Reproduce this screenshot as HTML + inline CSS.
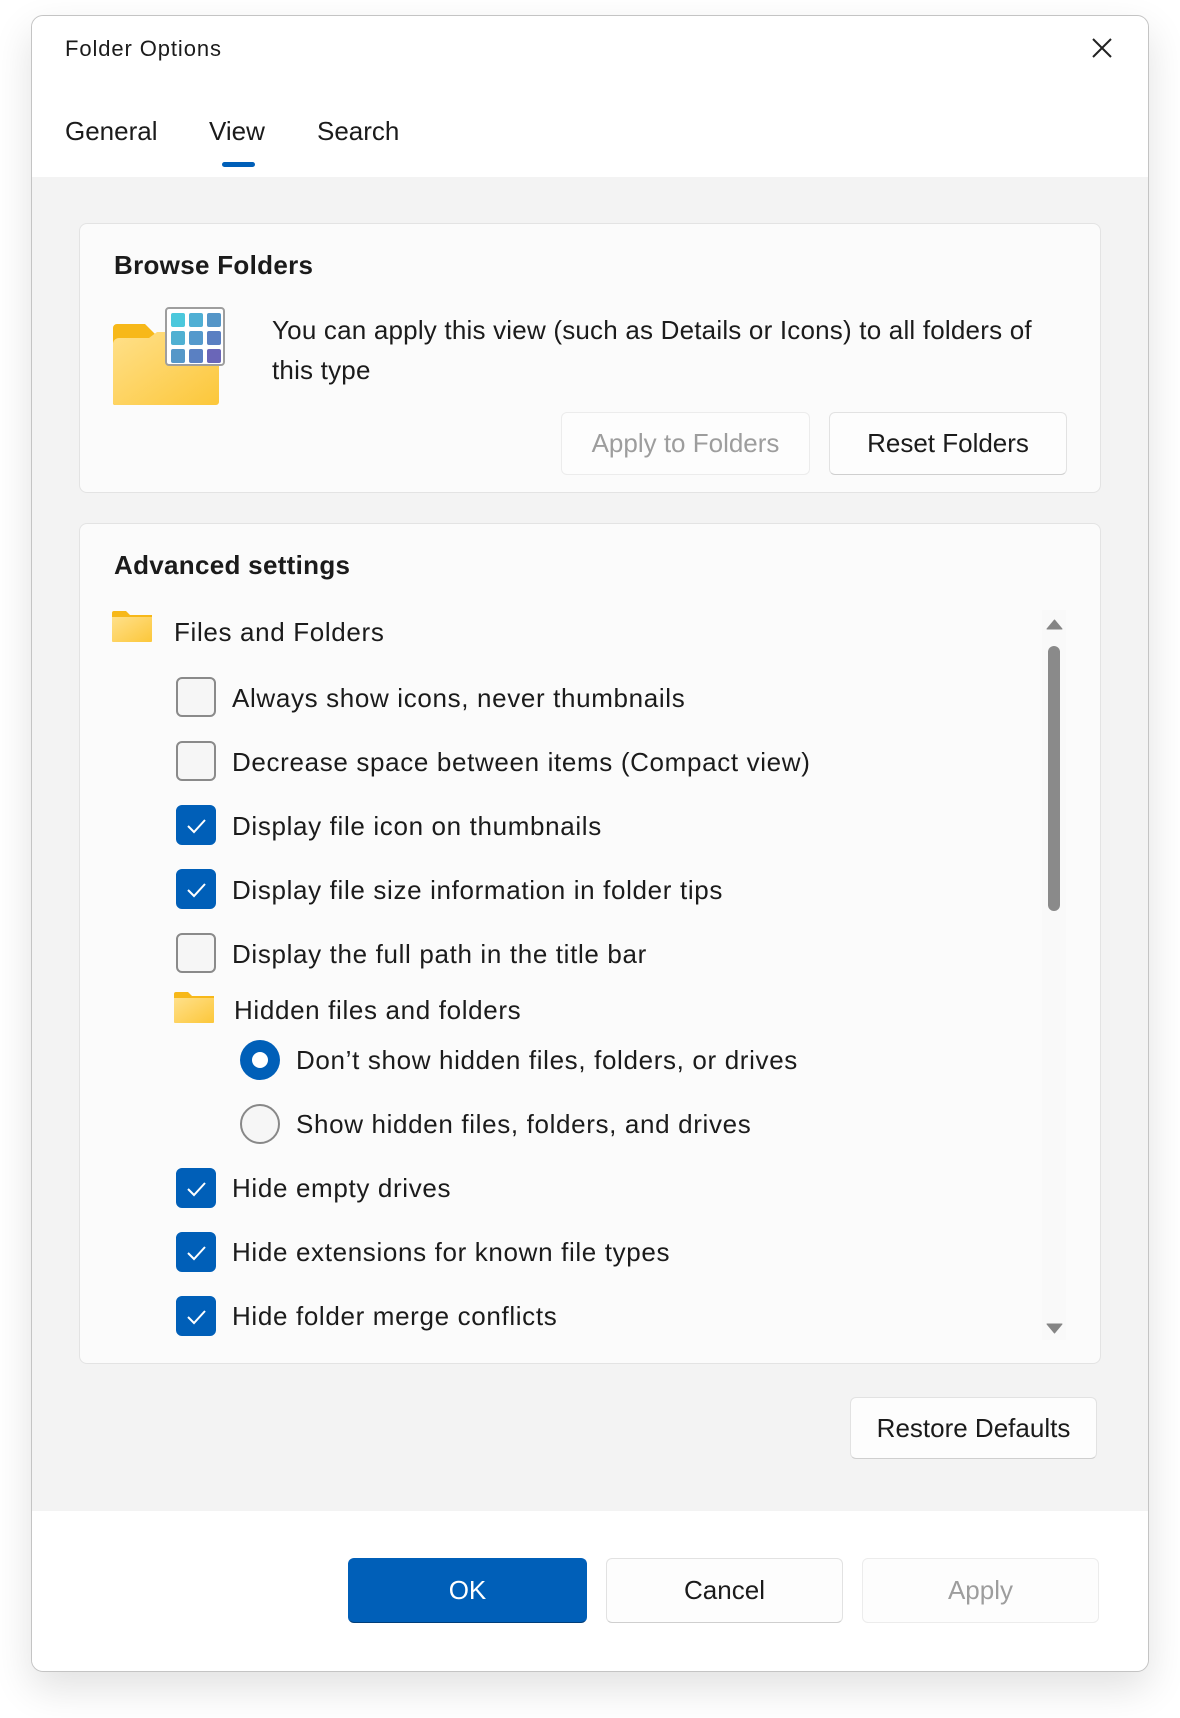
<!DOCTYPE html>
<html><head><meta charset="utf-8"><style>
*{box-sizing:border-box;margin:0;padding:0}
body{width:1180px;height:1718px;background:#fff;font-family:"Liberation Sans",sans-serif;color:#1b1b1b;position:relative;overflow:hidden}
.a{position:absolute}
.dlg{left:31px;top:15px;width:1118px;height:1657px;border:1.5px solid #c4c4c4;border-radius:12px;background:#f3f3f3;overflow:hidden;box-shadow:0 16px 40px rgba(0,0,0,.12)}
.card{background:#fbfbfb;border:1.5px solid #e3e3e3;border-radius:8px}
.btn{border:1.5px solid #e2e2e2;border-bottom-color:#cfcfcf;border-radius:6px;background:#fdfdfd;font-size:26px;display:flex;align-items:center;justify-content:center}
.t{font-size:26px;white-space:nowrap;line-height:30px;letter-spacing:0.65px}
.cb{width:40px;height:40px;border-radius:6px;border:2px solid #8a8a8a;background:#f6f6f6}
.cb.on{background:#005fb8;border-color:#005fb8}
.cb svg{display:block}
</style></head><body>
<div class="a dlg">
 <div class="a" style="left:0;top:0;width:100%;height:161px;background:#fff"></div>
 <div class="a" style="left:0;top:1495px;width:100%;height:170px;background:#fff"></div>
</div>
<div class="a t" style="left:65px;top:34px;font-size:22px;letter-spacing:0.9px">Folder Options</div>
<svg class="a" style="left:1091px;top:37px" width="22" height="22" viewBox="0 0 22 22"><path d="M2 2L20 20M20 2L2 20" stroke="#222" stroke-width="2"/></svg>
<div class="a t" style="left:65px;top:116px;letter-spacing:0">General</div>
<div class="a t" style="left:209px;top:116px;letter-spacing:0">View</div>
<div class="a t" style="left:317px;top:116px;letter-spacing:0">Search</div>
<div class="a" style="left:222px;top:162px;width:33px;height:5px;border-radius:3px;background:#005fb8"></div>

<div class="a card" style="left:79px;top:223px;width:1022px;height:270px"></div>
<div class="a t" style="left:114px;top:250px;font-weight:bold;letter-spacing:0.3px">Browse Folders</div>
<svg class="a" style="left:110px;top:306px" width="116" height="102" viewBox="0 0 116 102">
<defs><linearGradient id="fg" x1="0" y1="0" x2="1" y2="1"><stop offset="0" stop-color="#ffe08a"/><stop offset="1" stop-color="#fcc73a"/></linearGradient></defs>
<path d="M3 22a4 4 0 0 1 4-4h28l10 10h55v68a3 3 0 0 1-3 3H5a2 2 0 0 1-2-2z" fill="#f7b819"/>
<path d="M3 38a6 6 0 0 1 6-6h30l8-6h62v70a3 3 0 0 1-3 3H5a2 2 0 0 1-2-2z" fill="url(#fg)"/>
<rect x="56" y="2" width="58" height="57" rx="3" fill="#fff" stroke="#9e9e9e" stroke-width="2"/>
<g><rect x="61" y="7" width="14" height="14" rx="2" fill="#4bc8dc"/><rect x="79" y="7" width="14" height="14" rx="2" fill="#4fafd4"/><rect x="97" y="7" width="14" height="14" rx="2" fill="#5596c8"/>
<rect x="61" y="25" width="14" height="14" rx="2" fill="#4fb0d2"/><rect x="79" y="25" width="14" height="14" rx="2" fill="#5499cc"/><rect x="97" y="25" width="14" height="14" rx="2" fill="#5a7fc2"/>
<rect x="61" y="43" width="14" height="14" rx="2" fill="#5597c8"/><rect x="79" y="43" width="14" height="14" rx="2" fill="#5a80c2"/><rect x="97" y="43" width="14" height="14" rx="2" fill="#6a66b8"/></g>
</svg>
<div class="a t" style="left:272px;top:310px;line-height:40px;white-space:normal;width:800px;letter-spacing:0.2px">You can apply this view (such as Details or Icons) to all folders of<br>this type</div>
<div class="a btn" style="left:561px;top:412px;width:249px;height:63px;color:#9d9d9d;border-color:#ececec">Apply to Folders</div>
<div class="a btn" style="left:829px;top:412px;width:238px;height:63px">Reset Folders</div>

<div class="a card" style="left:79px;top:523px;width:1022px;height:841px"></div>
<div class="a t" style="left:114px;top:550px;font-weight:bold;letter-spacing:0.3px">Advanced settings</div>
<svg class="a" style="left:112px;top:610px" width="40" height="32" viewBox="0 0 40 32"><path d="M0 3a2 2 0 0 1 2-2h12l4 4h22v26H0z" fill="#f7b819"/><path d="M0 7h40v24a1 1 0 0 1-1 1H1a1 1 0 0 1-1-1z" fill="url(#fg)"/></svg>
<div class="a t" style="left:174px;top:617px">Files and Folders</div>

<div class="a" style="left:1042px;top:610px;width:24px;height:730px;background:#f9f9f9"></div>
<svg class="a" style="left:1046px;top:619px" width="17" height="11"><path d="M8.5 1L16 10H1z" fill="#858585" stroke="#858585" stroke-linejoin="round"/></svg>
<div class="a" style="left:1048px;top:646px;width:12px;height:265px;border-radius:6px;background:#8a8a8a"></div>
<svg class="a" style="left:1046px;top:1323px" width="17" height="11"><path d="M8.5 10L16 1H1z" fill="#858585" stroke="#858585" stroke-linejoin="round"/></svg>

<div class="a cb" style="left:176px;top:677px"></div><div class="a t" style="left:232px;top:683px">Always show icons, never thumbnails</div>
<div class="a cb" style="left:176px;top:741px"></div><div class="a t" style="left:232px;top:747px">Decrease space between items (Compact view)</div>
<div class="a cb on" style="left:176px;top:805px"><svg width="36" height="36"><path d="M10 19l6 6 11-12" fill="none" stroke="#fff" stroke-width="2"/></svg></div><div class="a t" style="left:232px;top:811px">Display file icon on thumbnails</div>
<div class="a cb on" style="left:176px;top:869px"><svg width="36" height="36"><path d="M10 19l6 6 11-12" fill="none" stroke="#fff" stroke-width="2"/></svg></div><div class="a t" style="left:232px;top:875px">Display file size information in folder tips</div>
<div class="a cb" style="left:176px;top:933px"></div><div class="a t" style="left:232px;top:939px">Display the full path in the title bar</div>
<svg class="a" style="left:174px;top:991px" width="40" height="32" viewBox="0 0 40 32"><path d="M0 3a2 2 0 0 1 2-2h12l4 4h22v26H0z" fill="#f7b819"/><path d="M0 7h40v24a1 1 0 0 1-1 1H1a1 1 0 0 1-1-1z" fill="url(#fg)"/></svg>
<div class="a t" style="left:234px;top:995px">Hidden files and folders</div>
<div class="a" style="left:240px;top:1040px;width:40px;height:40px;border-radius:50%;background:#005fb8"><div class="a" style="left:12px;top:12px;width:16px;height:16px;border-radius:50%;background:#fff"></div></div>
<div class="a t" style="left:296px;top:1045px">Don’t show hidden files, folders, or drives</div>
<div class="a" style="left:240px;top:1104px;width:40px;height:40px;border-radius:50%;border:2px solid #888;background:#f6f6f6"></div>
<div class="a t" style="left:296px;top:1109px">Show hidden files, folders, and drives</div>
<div class="a cb on" style="left:176px;top:1168px"><svg width="36" height="36"><path d="M10 19l6 6 11-12" fill="none" stroke="#fff" stroke-width="2"/></svg></div><div class="a t" style="left:232px;top:1173px">Hide empty drives</div>
<div class="a cb on" style="left:176px;top:1232px"><svg width="36" height="36"><path d="M10 19l6 6 11-12" fill="none" stroke="#fff" stroke-width="2"/></svg></div><div class="a t" style="left:232px;top:1237px">Hide extensions for known file types</div>
<div class="a cb on" style="left:176px;top:1296px"><svg width="36" height="36"><path d="M10 19l6 6 11-12" fill="none" stroke="#fff" stroke-width="2"/></svg></div><div class="a t" style="left:232px;top:1301px">Hide folder merge conflicts</div>

<div class="a btn" style="left:850px;top:1397px;width:247px;height:62px">Restore Defaults</div>
<div class="a btn" style="left:348px;top:1558px;width:239px;height:65px;background:#005fb8;border-color:#005fb8;border-bottom-color:#003e7a;color:#fff">OK</div>
<div class="a btn" style="left:606px;top:1558px;width:237px;height:65px">Cancel</div>
<div class="a btn" style="left:862px;top:1558px;width:237px;height:65px;color:#9d9d9d;border-color:#ececec">Apply</div>
</body></html>
